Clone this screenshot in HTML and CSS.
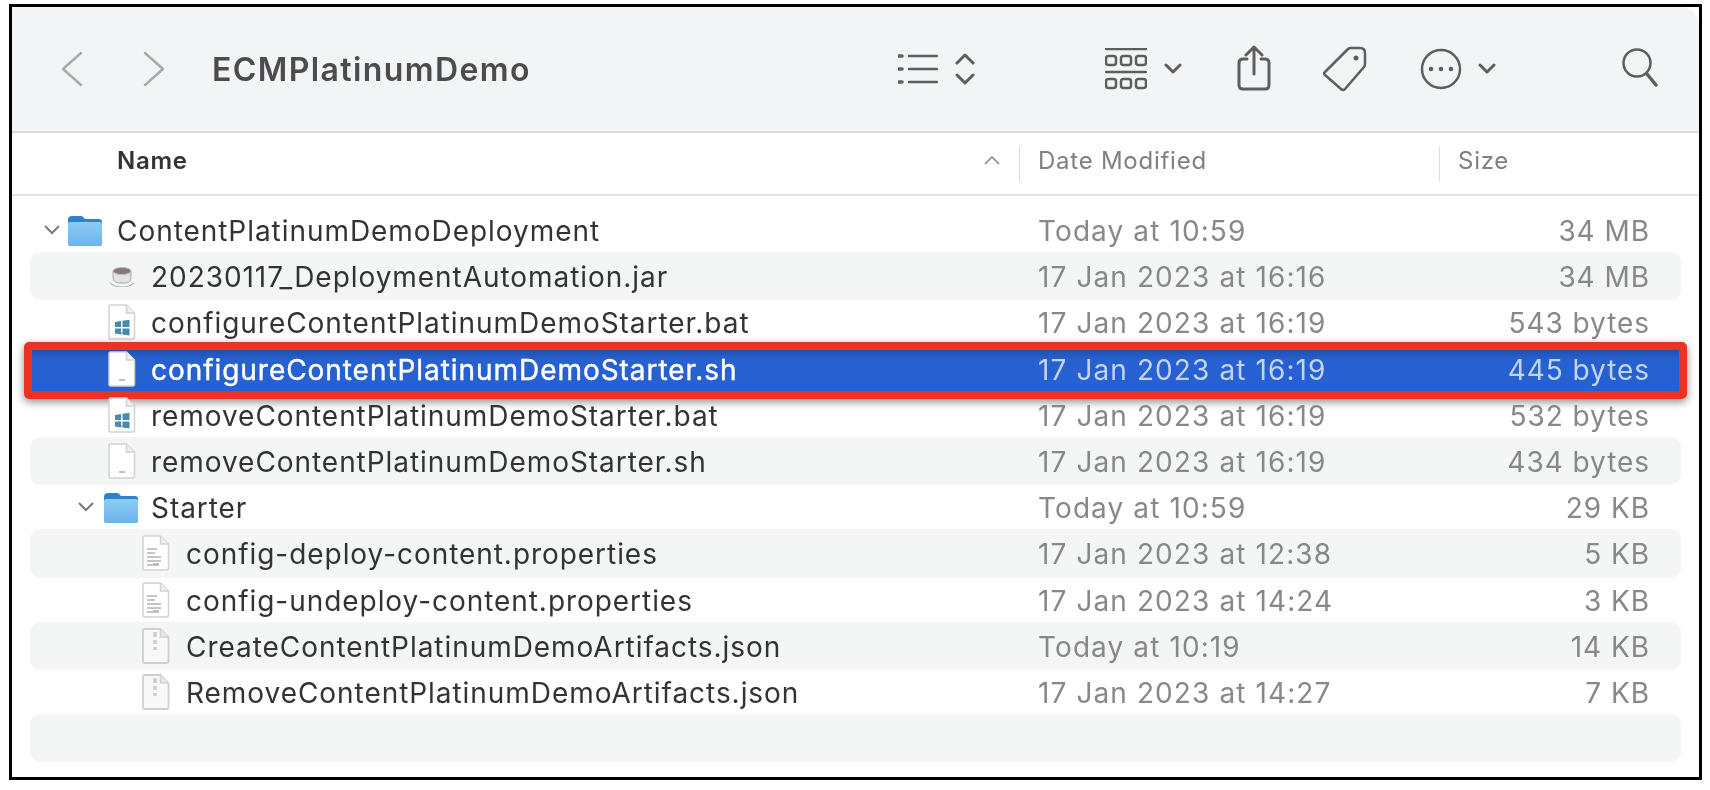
FILE: index.html
```html
<!DOCTYPE html>
<html lang="en">
<head>
    <meta charset="UTF-8">
    <title>ECMPlatinumDemo</title>
    <link rel="stylesheet" href="styles.css">
</head>
<body>
    <svg class="defs" width="0" height="0">
        <defs>
            <linearGradient id="folder-body" x1="0" y1="0" x2="0" y2="1">
                <stop offset="0" stop-color="#8ccbf5"/>
                <stop offset="1" stop-color="#6db5ea"/>
            </linearGradient>
        </defs>
        <symbol id="folder" viewBox="0 0 36 32">
            <path d="M1 6q0-4 4-4h9q2 0 3 2l1 1h14q3 0 3 3v21q0 3-3 3H4q-3 0-3-3z" fill="#2f82c8"/>
            <path d="M1 10q0-2 2-2h30q2 0 2 2v19q0 3-3 3H4q-3 0-3-3z" fill="url(#folder-body)"/>
        </symbol>
        <symbol id="page" viewBox="0 0 28 36">
            <path d="M2.500 1h16l8 8v24q0 2-2 2h-22q-1.500 0-1.500-2V3q0-2 1.500-2z" fill="#fff" stroke="#d2d2d2" stroke-width="1.500"/>
            <path d="M18.500 1v8h8" fill="#f0f0f0" stroke="#d2d2d2" stroke-width="1.500"/>
            <path d="M11 29h6" stroke="#9a9a9a" stroke-width="1.200"/>
        </symbol>
        <symbol id="bat" viewBox="0 0 28 36">
            <use href="#page" width="28" height="36"/>
            <path d="M7 18l6-1v6H7zM14.500 16.800l7-1v7.200h-7zM7 24.500h6v6l-6-1zM14.500 24.500h7v7l-7-1z" fill="#4a8bab"/>
        </symbol>
        <symbol id="text" viewBox="0 0 28 36">
            <use href="#page" width="28" height="36"/>
            <path d="M5 14h10M5 18h8M5 22h14M5 26h14M5 30h12" stroke="#b4b4b4" stroke-width="1.300"/>
        </symbol>
        <symbol id="json" viewBox="0 0 28 36">
            <path d="M2.500 1h16l8 8v24q0 2-2 2h-22q-1.500 0-1.500-2V3q0-2 1.500-2z" fill="#f8f8f8" stroke="#cfcfcf" stroke-width="1.800"/>
            <path d="M18.500 1v8h8" fill="#e8e8e8" stroke="#d2d2d2" stroke-width="1.500"/>
            <path d="M13 4v5M13 12v4M13 19v3" stroke="#cdcdcd" stroke-width="3.500"/>
        </symbol>
    </svg>

    <div class="window">
        <header class="toolbar">
            <svg class="icon back" width="26" height="38" viewBox="0 0 26 38"><path d="M23 3L5 19l18 16" stroke="#a9a9a9"/></svg>
            <svg class="icon forward" width="26" height="38" viewBox="0 0 26 38"><path d="M3 3l18 16L3 35" stroke="#a9a9a9"/></svg>
            <h1 class="title">ECMPlatinumDemo</h1>
            <svg class="icon view-list" width="40" height="32" viewBox="0 0 40 32"><path d="M1 3h3M1 16h3M1 29h3" stroke-width="3.500"/><path d="M11 3h28M11 16h28M11 29h28"/></svg>
            <svg class="icon view-sort" width="20" height="34" viewBox="0 0 20 34"><path d="M2 11l8-8 8 8M2 23l8 8 8-8" stroke-width="3"/></svg>
            <svg class="icon group" width="42" height="42" viewBox="0 0 42 42">
                <path d="M1 1h40M1 24h40"/>
                <g stroke-width="2.500">
                    <rect x="1" y="8" width="10" height="9" rx="2.500"/><rect x="16" y="8" width="10" height="9" rx="2.500"/><rect x="31" y="8" width="10" height="9" rx="2.500"/>
                    <rect x="1" y="31" width="10" height="9" rx="2.500"/><rect x="16" y="31" width="10" height="9" rx="2.500"/><rect x="31" y="31" width="10" height="9" rx="2.500"/>
                </g>
            </svg>
            <svg class="icon caret-a" width="18" height="12" viewBox="0 0 18 12"><path d="M2 2l7 7 7-7" stroke-width="3"/></svg>
            <svg class="icon share" width="34" height="46" viewBox="0 0 34 46"><path d="M10 14H6q-4 0-4 4v22q0 4 4 4h22q4 0 4-4V18q0-4-4-4h-4M17 29V3M9 10l8-8 8 8" stroke-width="3"/></svg>
            <svg class="icon tag" width="44" height="46" viewBox="0 0 44 46"><path d="M2 26L25 3q1-1 3-1h9q5 0 5 5v11q0 2-1 3L22 43q-2 2-4 0L2 29q-2-2 0-3z"/><circle cx="33" cy="12" r="2.500" fill="#5e5e5e" stroke="none"/></svg>
            <svg class="icon more" width="42" height="42" viewBox="0 0 42 42"><circle cx="21" cy="21" r="19"/><circle cx="11" cy="21" r="2.300" fill="#5e5e5e" stroke="none"/><circle cx="21" cy="21" r="2.300" fill="#5e5e5e" stroke="none"/><circle cx="31" cy="21" r="2.300" fill="#5e5e5e" stroke="none"/></svg>
            <svg class="icon caret-b" width="18" height="12" viewBox="0 0 18 12"><path d="M2 2l7 7 7-7" stroke-width="3"/></svg>
            <svg class="icon search" width="36" height="40" viewBox="0 0 36 40"><circle cx="15" cy="15" r="13.500"/><path d="M25 26l9 11" stroke-width="3.500"/></svg>
        </header>

        <div class="columns">
            <div class="col col-name">
                <span>Name</span>
                <svg class="sort-arrow" width="16" height="9" viewBox="0 0 16 9"><path d="M1 8l7-7 7 7"/></svg>
            </div>
            <div class="col col-date">Date Modified</div>
            <div class="col col-size">Size</div>
        </div>

        <div class="rows">
            <div class="row">
                <div class="name">
                    <svg class="chevron" width="16" height="10" viewBox="0 0 16 10"><path d="M1 1l7 7 7-7"/></svg>
                    <svg class="folder" width="36" height="32"><use href="#folder"/></svg>
                    <span>ContentPlatinumDemoDeployment</span>
                </div>
                <div class="date">Today at 10:59</div>
                <div class="size">34 MB</div>
            </div>
            <div class="row alt">
                <div class="name level-1">
                    <svg class="file" width="28" height="36" viewBox="0 0 28 36"><path d="M1 24q13 9 26 0q-2 5-13 5T1 24z" fill="#a4a4a4"/><path d="M5 13h18v6q0 5-5 6h-8q-5-1-5-6z" fill="#e2e2e2" stroke="#a8a8a8"/><ellipse cx="14" cy="13" rx="9" ry="3.500" fill="#85787a" stroke="#bbb"/></svg>
                    <span>20230117_DeploymentAutomation.jar</span>
                </div>
                <div class="date">17 Jan 2023 at 16:16</div>
                <div class="size">34 MB</div>
            </div>
            <div class="row">
                <div class="name level-1">
                    <svg class="file" width="28" height="36"><use href="#bat"/></svg>
                    <span>configureContentPlatinumDemoStarter.bat</span>
                </div>
                <div class="date">17 Jan 2023 at 16:19</div>
                <div class="size">543 bytes</div>
            </div>
            <div class="row selected">
                <div class="name level-1">
                    <svg class="file" width="28" height="36"><use href="#page"/></svg>
                    <span>configureContentPlatinumDemoStarter.sh</span>
                </div>
                <div class="date">17 Jan 2023 at 16:19</div>
                <div class="size">445 bytes</div>
            </div>
            <div class="row">
                <div class="name level-1">
                    <svg class="file" width="28" height="36"><use href="#bat"/></svg>
                    <span>removeContentPlatinumDemoStarter.bat</span>
                </div>
                <div class="date">17 Jan 2023 at 16:19</div>
                <div class="size">532 bytes</div>
            </div>
            <div class="row alt">
                <div class="name level-1">
                    <svg class="file" width="28" height="36"><use href="#page"/></svg>
                    <span>removeContentPlatinumDemoStarter.sh</span>
                </div>
                <div class="date">17 Jan 2023 at 16:19</div>
                <div class="size">434 bytes</div>
            </div>
            <div class="row">
                <div class="name level-1">
                    <svg class="chevron nested" width="16" height="10" viewBox="0 0 16 10"><path d="M1 1l7 7 7-7"/></svg>
                    <svg class="folder" width="36" height="32"><use href="#folder"/></svg>
                    <span>Starter</span>
                </div>
                <div class="date">Today at 10:59</div>
                <div class="size">29 KB</div>
            </div>
            <div class="row alt">
                <div class="name level-2">
                    <svg class="file" width="28" height="36"><use href="#text"/></svg>
                    <span>config-deploy-content.properties</span>
                </div>
                <div class="date">17 Jan 2023 at 12:38</div>
                <div class="size">5 KB</div>
            </div>
            <div class="row">
                <div class="name level-2">
                    <svg class="file" width="28" height="36"><use href="#text"/></svg>
                    <span>config-undeploy-content.properties</span>
                </div>
                <div class="date">17 Jan 2023 at 14:24</div>
                <div class="size">3 KB</div>
            </div>
            <div class="row alt">
                <div class="name level-2">
                    <svg class="file" width="28" height="36"><use href="#json"/></svg>
                    <span>CreateContentPlatinumDemoArtifacts.json</span>
                </div>
                <div class="date">Today at 10:19</div>
                <div class="size">14 KB</div>
            </div>
            <div class="row">
                <div class="name level-2">
                    <svg class="file" width="28" height="36"><use href="#json"/></svg>
                    <span>RemoveContentPlatinumDemoArtifacts.json</span>
                </div>
                <div class="date">17 Jan 2023 at 14:27</div>
                <div class="size">7 KB</div>
            </div>
            <div class="row alt"></div>
        </div>
    </div>
</body>
</html>
```

FILE: styles.css
```css
body {
    margin: 0;
    background: #fff;
    font-family: Inter, "Liberation Sans", sans-serif;
}
.defs {
    position: absolute;
}
.window {
    box-sizing: border-box;
    width: 1693px;
    height: 776px;
    margin: 4px 0 0 9px;
    border: 3px solid #000;
    overflow: hidden;
}
/* the reference is a soft, upscaled capture */
.toolbar, .columns, .rows {
    filter: blur(.6px);
}
.toolbar {
    display: flex;
    align-items: center;
    height: 124px;
    background: #f3f4f6;
    border-bottom: 2px solid #dcdcdc;
    border-top-right-radius: 18px;
}
.icon {
    flex: none;
    fill: none;
    stroke: #5e5e5e;
    stroke-width: 2.500;
    stroke-linecap: round;
    stroke-linejoin: round;
}
.back { margin-left: 46px; }
.forward { margin-left: 58px; }
.title {
    margin: 0 0 0 44px;
    width: 686px;
    font-size: 32px;
    font-weight: 600;
    letter-spacing: 1.400px;
    color: #4c4c4c;
}
.view-sort { margin-left: 17px; }
.group { margin-left: 130px; }
.caret-a { margin-left: 17px; }
.share { margin: 0 0 3px 55px; }
.tag { margin-left: 52px; }
.more { margin-left: 53px; }
.caret-b { margin-left: 16px; }
.search { margin: 0 0 3px 126px; }

.columns {
    display: flex;
    align-items: center;
    height: 61px;
    border-bottom: 2px solid #e2e2e2;
    font-size: 24px;
    letter-spacing: .75px;
    color: #808080;
}
.col {
    display: flex;
    align-items: center;
    box-sizing: border-box;
    height: 36px;
    padding-bottom: 6px;
}
.col-name {
    width: 1008px;
    padding-left: 105px;
    padding-right: 19px;
    justify-content: space-between;
    border-right: 1px solid #ddd;
    color: #333;
    font-weight: 600;
}
.sort-arrow {
    fill: none;
    stroke: #888;
    stroke-width: 1.500;
}
.col-date {
    width: 420px;
    padding-left: 18px;
    border-right: 1px solid #ddd;
}
.col-size {
    padding-left: 18px;
}

.rows {
    padding: 11px 18px 0 18px;
}
.row {
    display: flex;
    align-items: center;
    box-sizing: border-box;
    height: 46.200px;
    padding-top: 2px;
    border-radius: 10px;
    font-size: 28px;
    letter-spacing: .95px;
    color: #888;
    position: relative;
}
.alt {
    background: #f4f5f5;
    box-shadow: 0 -1px 0 #fdf3f1, 0 1px 0 #fdf3f1;
}
.name {
    display: flex;
    align-items: center;
    width: 1008px;
    flex: none;
    padding-left: 14px;
    box-sizing: border-box;
    color: #333;
}
.name .file, .name .folder, .name .chevron {
    margin-top: -2px;
}
.chevron {
    flex: none;
    fill: none;
    stroke: #7a7a7a;
    stroke-width: 2;
    margin-right: 7px;
}
.folder {
    margin-right: 14px;
}
.level-1 {
    padding-left: 78px;
}
.level-1 .chevron.nested {
    margin-left: -30px;
    margin-right: 9px;
}
.level-1 .folder {
    margin-right: 12px;
}
.level-2 {
    padding-left: 112px;
}
.level-2 .file {
    margin-right: 16px;
}
.file {
    margin-right: 15px;
    flex: none;
}
.date {
    width: 400px;
    flex: none;
    letter-spacing: 1.100px;
}
.size {
    width: 212px;
    flex: none;
    text-align: right;
}

/* the blue row and the red annotation drawn around it */
.selected {
    background: linear-gradient(#1f4a9e, #2760d0 30%, #2760d0);
    border-radius: 0;
    color: #c3d4f3;
}
.selected .name {
    color: #fff;
    -webkit-text-stroke: .4px #fff;
}
.selected::after {
    content: "";
    position: absolute;
    top: -4px;
    left: -6px;
    right: -6px;
    bottom: -7px;
    border: 8px solid #e93323;
    border-radius: 5px;
    box-shadow: 0 3px 8px rgba(0, 0, 0, .45);
}
```
